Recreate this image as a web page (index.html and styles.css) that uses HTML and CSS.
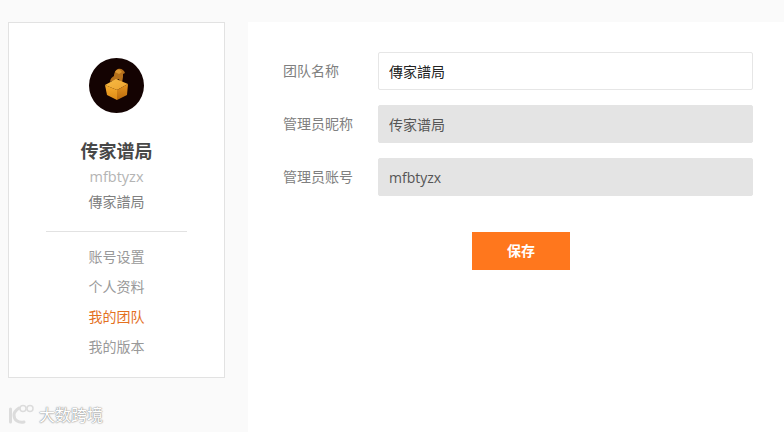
FILE: index.html
```html
<!DOCTYPE html>
<html lang="zh-CN">
<head>
<meta charset="utf-8">
<title>我的团队</title>
<link rel="stylesheet" href="styles.css">
</head>
<body>
<div class="page">
  <aside class="side">
    <div class="card">
      <svg class="avatar" viewBox="0 0 55 55" aria-hidden="true">
        <defs>
          <linearGradient id="top" x1="0" y1="0" x2="1" y2="1"><stop offset="0" stop-color="#f7bb45"/><stop offset="1" stop-color="#eda32e"/></linearGradient>
          <linearGradient id="left" x1="0" y1="0" x2="0" y2="1"><stop offset="0" stop-color="#f5ab2e"/><stop offset="1" stop-color="#dd8a16"/></linearGradient>
          <linearGradient id="right" x1="0" y1="0" x2="0" y2="1"><stop offset="0" stop-color="#e69520"/><stop offset="1" stop-color="#b8690c"/></linearGradient>
        </defs>
        <circle cx="27.5" cy="27.5" r="27.5" fill="#140302"/>
        <path d="M21 24c0-3 2-5 4-6 0-2 1-6 4-7 3-1 6 1 7 4l-2 1 0 3-1 6-2 0-1-4-3 1-1 3-2 0-1-2z" fill="#b5701c"/>
        <path d="M26 14c1-2 3-3 5-2l2 2-3 2z" fill="#dc9632"/>
        <path d="M16 27l11-6 12 5-11 6z" fill="url(#top)"/>
        <path d="M16 27l12 5v10l-10-5z" fill="url(#left)"/>
        <path d="M39 26l-11 6v10l10-5z" fill="url(#right)"/>
      </svg>
      <h2 class="name">传家谱局</h2>
      <div class="account">mfbtyzx</div>
      <div class="team">傳家譜局</div>
      <hr class="rule">
      <nav class="menu">
        <a class="item">账号设置</a>
        <a class="item">个人资料</a>
        <a class="item active">我的团队</a>
        <a class="item">我的版本</a>
      </nav>
    </div>
    <div class="mark">
      <svg class="mark-logo" viewBox="0 0 27 22" aria-hidden="true">
        <g fill="none" stroke="#dcdcdc" stroke-linecap="round">
          <path d="M2.500 5v13" stroke-width="3"/>
          <path d="M11 4c-3 2-5 4-5 7 0 5 4 8 10 7" stroke-width="3"/>
          <circle cx="15" cy="4.500" r="3" stroke-width="1.500"/>
          <circle cx="22" cy="4.500" r="3" stroke-width="1.500"/>
        </g>
      </svg>
      <span class="mark-text">大数跨境</span>
    </div>
  </aside>
  <main class="main">
    <form class="form">
      <div class="row">
        <label class="label">团队名称</label>
        <input class="field" type="text" value="傳家譜局">
      </div>
      <div class="row">
        <label class="label">管理员昵称</label>
        <input class="field off" type="text" value="传家谱局" disabled>
      </div>
      <div class="row">
        <label class="label">管理员账号</label>
        <input class="field off" type="text" value="mfbtyzx" disabled>
      </div>
      <div class="actions">
        <button class="save" type="button">保存</button>
      </div>
    </form>
  </main>
</div>
</body>
</html>
```
FILE: styles.css
```css
* { box-sizing: border-box; }
html, body { margin: 0; height: 100%; overflow: hidden; }
body {
  background: #fafafa;
  font-family: "Open Sans", "Noto Sans CJK SC", sans-serif;
  font-size: 14px;
  color: #666;
}
.page {
  display: flex;
  gap: 23px;
  height: 432px;
  padding: 22px 0 0 8px;
}
.side { width: 217px; flex: none; }
.card {
  height: 356px;
  background: #fff;
  border: 1px solid #e2e2e2;
  display: flex;
  flex-direction: column;
  align-items: center;
  padding-top: 35px;
}
.avatar { width: 55px; height: 55px; display: block; }
.name {
  margin: 25px 0 0;
  font-size: 18px;
  line-height: 26px;
  font-weight: 700;
  color: #484848;
}
.account {
  margin-top: 1px;
  font-size: 14.5px;
  line-height: 24px;
  color: #b4b4b4;
}
.team {
  margin-top: 1px;
  font-size: 14px;
  line-height: 24px;
  color: #808080;
}
.rule {
  width: 141px;
  height: 1px;
  margin: 17px 0 0;
  border: 0;
  background: #e2e2e2;
}
.menu {
  margin-top: 10px;
  display: flex;
  flex-direction: column;
  align-items: center;
}
.item {
  font-size: 14px;
  line-height: 30px;
  color: #999;
}
.item.active { color: #e4711f; }
.mark {
  display: flex;
  align-items: center;
  gap: 4px;
  margin-top: 26px;
}
.mark-logo { width: 27px; height: 22px; display: block; }
.mark-text {
  font-size: 16px;
  line-height: 22px;
  color: #fff;
  text-shadow: 0 0 1px #999, 0 0 1px #999, 0 0 2px #aaa;
}
.main {
  flex: 1;
  background: #fff;
  padding: 30px 31px 0 35px;
}
.form { display: flex; flex-direction: column; gap: 15px; }
.row { display: flex; align-items: center; }
.label {
  width: 95px;
  flex: none;
  font-size: 14px;
  line-height: 20px;
  color: #808080;
}
.field {
  flex: 1;
  min-width: 0;
  height: 38px;
  padding: 0 10px;
  background: #fff;
  border: 1px solid #e6e6e6;
  border-radius: 2px;
  font: 14px "Open Sans", "Noto Sans CJK SC", sans-serif;
  color: #222;
  outline: none;
}
.field.off {
  background: #e4e4e4;
  border-color: #e4e4e4;
  color: #555;
  -webkit-text-fill-color: #555;
  opacity: 1;
}
.actions { margin-top: 21px; padding-left: 189px; }
.save {
  display: block;
  width: 98px;
  height: 38px;
  border: 0;
  padding: 0 0 2px;
  background: #ff771d;
  color: #fff;
  font: 700 14px "Open Sans", "Noto Sans CJK SC", sans-serif;
}
```
